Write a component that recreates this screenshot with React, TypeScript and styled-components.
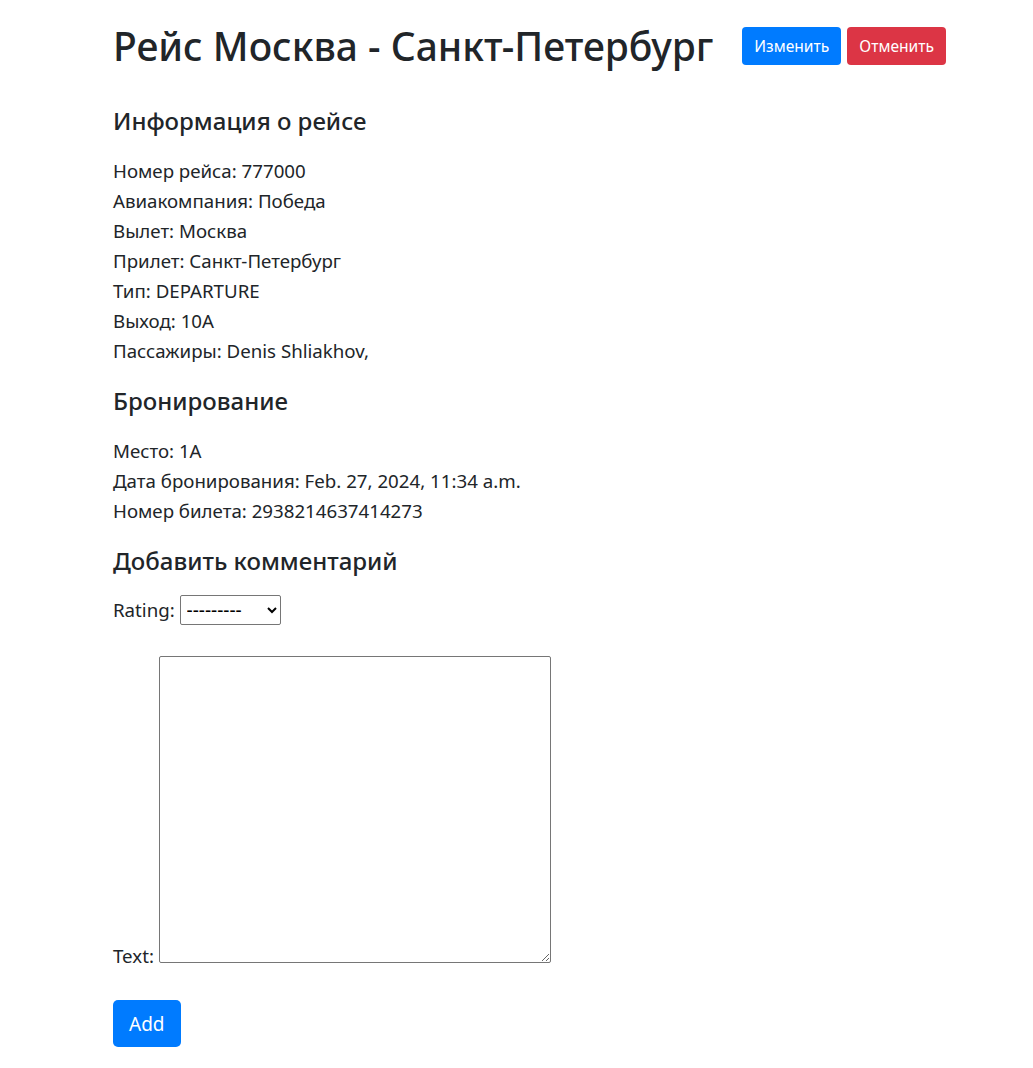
import React from "react";
import styled, { createGlobalStyle } from "styled-components";

const GlobalStyle = createGlobalStyle`
  body {
    margin: 0;
    background: #fff;
    color: #212529;
    font-family: "Noto Sans", "Open Sans", sans-serif;
    font-size: 18.7px;
    line-height: 1.5;
  }
`;

const info = [
  "Номер рейса: 777000",
  "Авиакомпания: Победа",
  "Вылет: Москва",
  "Прилет: Санкт-Петербург",
  "Тип: DEPARTURE",
  "Выход: 10A",
  "Пассажиры: Denis Shliakhov,",
];

const booking = [
  "Место: 1A",
  "Дата бронирования: Feb. 27, 2024, 11:34 a.m.",
  "Номер билета: 2938214637414273",
];

const App = () => {
  return (
    <Page>
      <GlobalStyle />
      <Header>
        <Title>Рейс Москва - Санкт-Петербург</Title>
        <Actions>
          <Button>Изменить</Button>
          <Button $variant="danger">Отменить</Button>
        </Actions>
      </Header>

      <Section>
        <SubTitle>Информация о рейсе</SubTitle>
        {info.map((line) => (
          <Line key={line}>{line}</Line>
        ))}
      </Section>

      <Section>
        <SubTitle>Бронирование</SubTitle>
        {booking.map((line) => (
          <Line key={line}>{line}</Line>
        ))}
      </Section>

      <Section>
        <SubTitle>Добавить комментарий</SubTitle>
        <Form onSubmit={(e) => e.preventDefault()}>
          <Field>
            <label htmlFor="rating">Rating:</label>{" "}
            <Select id="rating" defaultValue="">
              <option value="">---------</option>
              <option value="1">1</option>
              <option value="2">2</option>
              <option value="3">3</option>
              <option value="4">4</option>
              <option value="5">5</option>
            </Select>
          </Field>
          <Field>
            <label htmlFor="text">Text:</label>{" "}
            <TextArea id="text" cols={40} rows={10} />
          </Field>
          <AddButton type="submit">Add</AddButton>
        </Form>
      </Section>
    </Page>
  );
};

export default App;

const Page = styled.div`
  padding: 22px 0 20px 113px;
`;

const Header = styled.div`
  display: flex;
  align-items: center;
  margin-bottom: 37px;
`;

const Title = styled.h1`
  margin: 0;
  font-size: 39px;
  font-weight: 500;
  line-height: 48px;
`;

const Actions = styled.div`
  display: flex;
  gap: 6px;
  margin-left: 29px;
`;

const Button = styled.button<{ $variant?: "danger" }>`
  height: 38px;
  padding: 6px 11px;
  border: 1px solid transparent;
  border-radius: 4px;
  background: ${(p) => (p.$variant === "danger" ? "#dc3545" : "#007bff")};
  color: #fff;
  font-family: inherit;
  font-size: 15.6px;
  line-height: 24px;
  cursor: pointer;
`;

const Section = styled.section`
  margin-bottom: 21px;
`;

const SubTitle = styled.h4`
  margin: 0 0 20px;
  font-size: 24px;
  font-weight: 500;
  line-height: 1.2;
`;

const Line = styled.div`
  line-height: 30px;
`;

const Form = styled.form`
  margin-top: 20px;
`;

const Field = styled.p`
  margin: 0 0 31px;
  line-height: 26px;
`;

const Select = styled.select`
  height: 30px;
  width: 101px;
  padding: 0 2px;
  font-family: inherit;
  font-size: 19px;
  border: 1px solid #767676;
  border-radius: 2px;
  background: #fff;
  color: #000;
`;

const TextArea = styled.textarea`
  width: 392px;
  height: 307px;
  box-sizing: border-box;
  font-family: inherit;
  font-size: 19px;
  border: 1px solid #767676;
  border-radius: 2px;
  vertical-align: baseline;
`;

const AddButton = styled.button`
  height: 47px;
  padding: 8px 15px;
  border: 1px solid transparent;
  border-radius: 5px;
  background: #007bff;
  color: #fff;
  font-family: inherit;
  font-size: 19px;
  line-height: 30px;
  cursor: pointer;
  margin-top: 0;
`;
